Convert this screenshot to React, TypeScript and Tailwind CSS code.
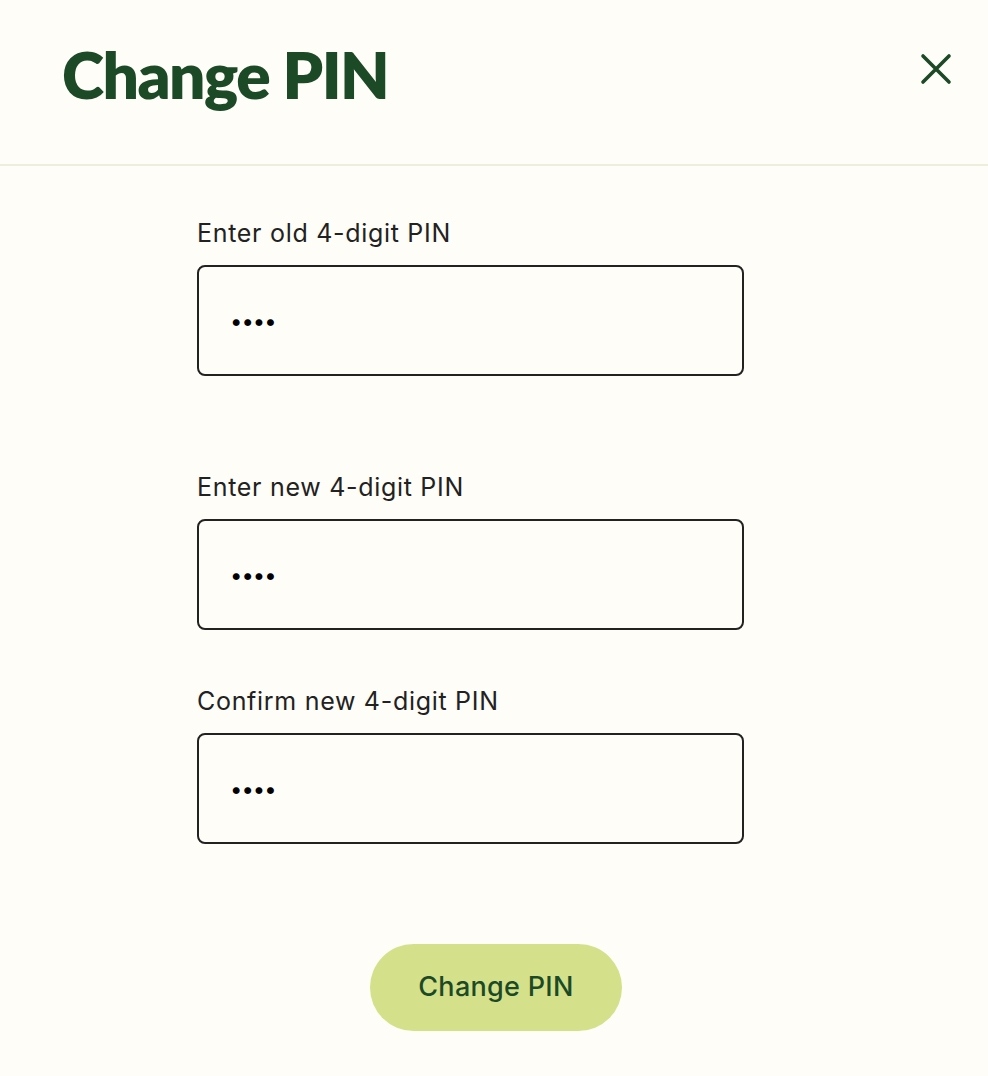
import { useState } from "react";

function PinField({ label, value, onChange }: { label: string; value: string; onChange: (v: string) => void }) {
  return (
    <div>
      <label className="block text-[25px] leading-[32px] tracking-[0.7px] text-[#222222]">{label}</label>
      <input
        type="password"
        value={value}
        onChange={(e) => onChange(e.target.value)}
        className="mt-[16px] box-border h-[111px] w-[547px] rounded-[8px] border-2 border-[#222222] bg-transparent px-[31px] text-[22px] tracking-[-1px] text-black outline-none"
      />
    </div>
  );
}

export default function App() {
  const [oldPin, setOldPin] = useState("1234");
  const [newPin, setNewPin] = useState("5678");
  const [confirmPin, setConfirmPin] = useState("5678");

  return (
    <div className="min-h-[1076px] w-full bg-[#fffdf7] font-['Inter',sans-serif]">
      <div className="flex h-[166px] items-center justify-between border-b-2 border-[#efece0] pl-[62px] pr-[36px]">
        <h1 className="pb-[14px] font-['Lato',sans-serif] text-[64px] font-extrabold tracking-[-1.5px] text-[#1c4a27]">
          Change PIN
        </h1>
        <button className="mb-[26px] text-[#1c4a27]">
          <svg width="32" height="32" viewBox="0 0 32 32" fill="none" stroke="currentColor" strokeWidth="3.6" strokeLinecap="round">
            <path d="M3 3 L29 29 M29 3 L3 29" />
          </svg>
        </button>
      </div>

      <div className="pl-[197px] pt-[51px]">
        <PinField label="Enter old 4-digit PIN" value={oldPin} onChange={setOldPin} />
        <div className="mt-[95px]">
          <PinField label="Enter new 4-digit PIN" value={newPin} onChange={setNewPin} />
        </div>
        <div className="mt-[55px]">
          <PinField label="Confirm new 4-digit PIN" value={confirmPin} onChange={setConfirmPin} />
        </div>
      </div>

      <div className="flex justify-center pt-[100px] pl-[4px]">
        <button className="h-[87px] w-[252px] rounded-full bg-[#d5e18a] text-[27px] font-medium tracking-[0.3px] text-[#1c4a27]">
          Change PIN
        </button>
      </div>
    </div>
  );
}
